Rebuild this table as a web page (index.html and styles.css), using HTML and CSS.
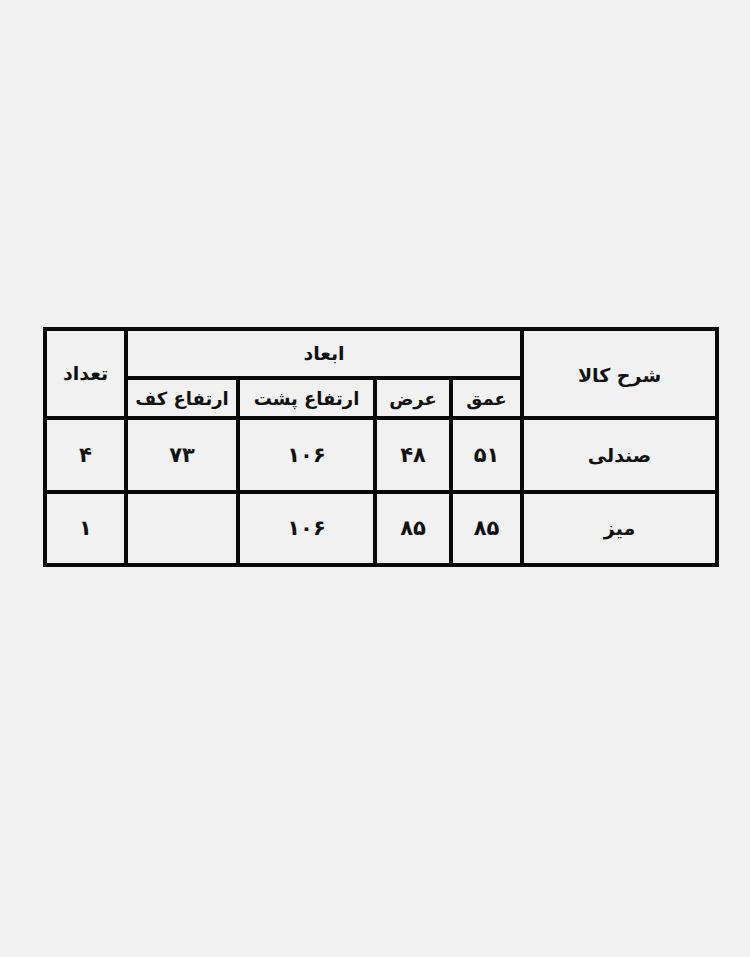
FILE: index.html
```html
<!DOCTYPE html>
<html lang="fa" dir="rtl">
<head>
<meta charset="utf-8">
<title>ابعاد</title>
<link rel="stylesheet" href="styles.css">
</head>
<body>
<main class="page">
  <div class="table">
    <div class="cell desc-head">شرح کالا</div>
    <div class="cell dims-head">ابعاد</div>
    <div class="cell qty-head">تعداد</div>
    <div class="cell sub">عمق</div>
    <div class="cell sub">عرض</div>
    <div class="cell sub">ارتفاع پشت</div>
    <div class="cell sub">ارتفاع کف</div>

    <div class="cell name">صندلی</div>
    <div class="cell num">۵۱</div>
    <div class="cell num">۴۸</div>
    <div class="cell num">۱۰۶</div>
    <div class="cell num">۷۳</div>
    <div class="cell num">۴</div>

    <div class="cell name">میز</div>
    <div class="cell num">۸۵</div>
    <div class="cell num">۸۵</div>
    <div class="cell num">۱۰۶</div>
    <div class="cell num"></div>
    <div class="cell num">۱</div>
  </div>
</main>
</body>
</html>
```
FILE: styles.css
```css
html, body {
  margin: 0;
  padding: 0;
  background: #f1f1f1;
}
body {
  font-family: "DejaVu Sans", "Noto Sans", sans-serif;
  color: #111;
}
.page {
  width: 750px;
  height: 957px;
  padding-top: 327px;
  padding-right: 31px;
  box-sizing: border-box;
  display: flex;
  justify-content: flex-start;
  align-items: flex-start;
}
.table {
  direction: rtl;
  display: grid;
  grid-template-columns: 191px 67px 72px 133px 108px 77px;
  grid-template-rows: 45px 36px 70px 69px;
  gap: 4px;
  padding: 4px;
  background: #0a0a0a;
}
.cell {
  background: #f1f1f1;
  display: flex;
  align-items: center;
  justify-content: center;
  font-weight: bold;
  font-size: 19px;
  line-height: 1;
}
.desc-head {
  grid-row: 1 / span 2;
  grid-column: 1;
  padding-top: 4px;
}
.dims-head {
  grid-row: 1;
  grid-column: 2 / span 4;
}
.qty-head {
  grid-row: 1 / span 2;
  grid-column: 6;
}
.sub {
  padding-top: 2px;
  font-size: 18px;
}
.num {
  font-size: 21px;
}
```
